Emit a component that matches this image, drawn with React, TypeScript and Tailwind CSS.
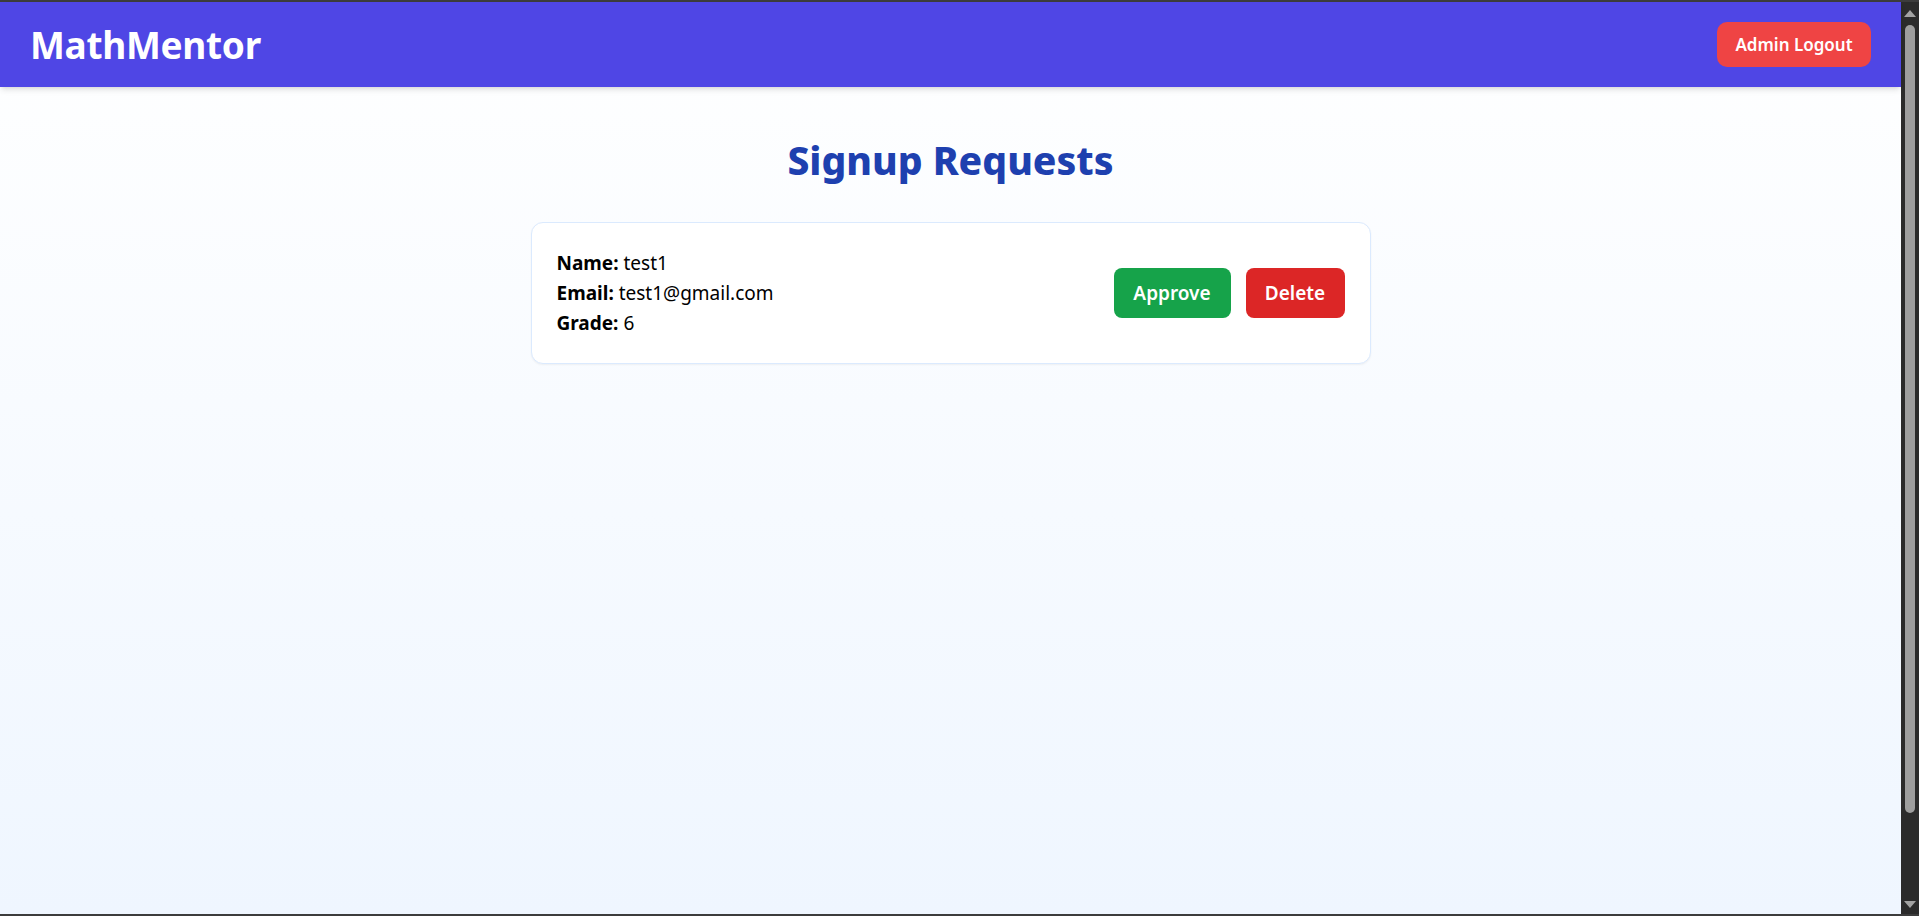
const requests = [{ name: "test1", email: "test1@gmail.com", grade: "6" }];

const ScrollBar = () => {
    return (
        <div className="flex h-full w-[18px] flex-col items-center bg-[#2b2b2b]">
            <div className="mt-[8px] h-0 w-0 border-x-[6px] border-b-[7px] border-x-transparent border-b-[#a3a3a3]" />
            <div className="mt-[8px] w-[10px] flex-1 rounded-full bg-[#9e9e9e]" />
            <div className="mt-[88px] mb-[6px] h-0 w-0 border-x-[6px] border-t-[7px] border-x-transparent border-t-[#a3a3a3]" />
        </div>
    );
};

const RequestCard = ({ req }: { req: { name: string; email: string; grade: string } }) => {
    return (
        <div className="mx-auto flex w-[840px] items-center justify-between rounded-[12px] border border-blue-100 bg-white p-[25px] shadow-xs">
            <div className="flex flex-col text-[19px] leading-[30px] text-black">
                <p>
                    <span className="font-bold">Name:</span> {req.name}
                </p>
                <p>
                    <span className="font-bold">Email:</span> {req.email}
                </p>
                <p>
                    <span className="font-bold">Grade:</span> {req.grade}
                </p>
            </div>
            <div className="flex gap-[15px]">
                <button className="h-[50px] w-[117px] rounded-[8px] bg-[#16a34a] text-[19px] font-semibold text-white">
                    Approve
                </button>
                <button className="h-[50px] w-[99px] rounded-[8px] bg-[#dc2626] text-[19px] font-semibold text-white">
                    Delete
                </button>
            </div>
        </div>
    );
};

export default function App() {
    return (
        <div
            className="flex h-[916px] w-full flex-col overflow-hidden bg-[#3c3c3c] pt-[2px] pb-[2px]"
            style={{ fontFamily: '"Noto Sans", "Open Sans", sans-serif' }}
        >
            <div className="flex min-h-0 flex-1">
                <div className="flex min-w-0 flex-1 flex-col bg-linear-to-b from-white to-[#eff6ff]">
                    <header className="relative z-10 flex h-[85px] shrink-0 items-center justify-between bg-[#4f46e5] px-[30px] shadow-md">
                        <h1 className="text-[37px] font-bold tracking-[-0.3px] text-white">MathMentor</h1>
                        <button className="h-[45px] w-[154px] rounded-[10px] bg-[#ef4444] text-[17px] font-semibold text-white">
                            Admin Logout
                        </button>
                    </header>
                    <main className="flex-1 p-[50px]">
                        <h2 className="mb-[40px] text-center text-[39px] leading-[45px] font-extrabold text-[#1e40af]">
                            Signup Requests
                        </h2>
                        <div className="flex flex-col gap-[20px]">
                            {requests.map((r) => (
                                <RequestCard key={r.email} req={r} />
                            ))}
                        </div>
                    </main>
                </div>
                <ScrollBar />
            </div>
        </div>
    );
}
